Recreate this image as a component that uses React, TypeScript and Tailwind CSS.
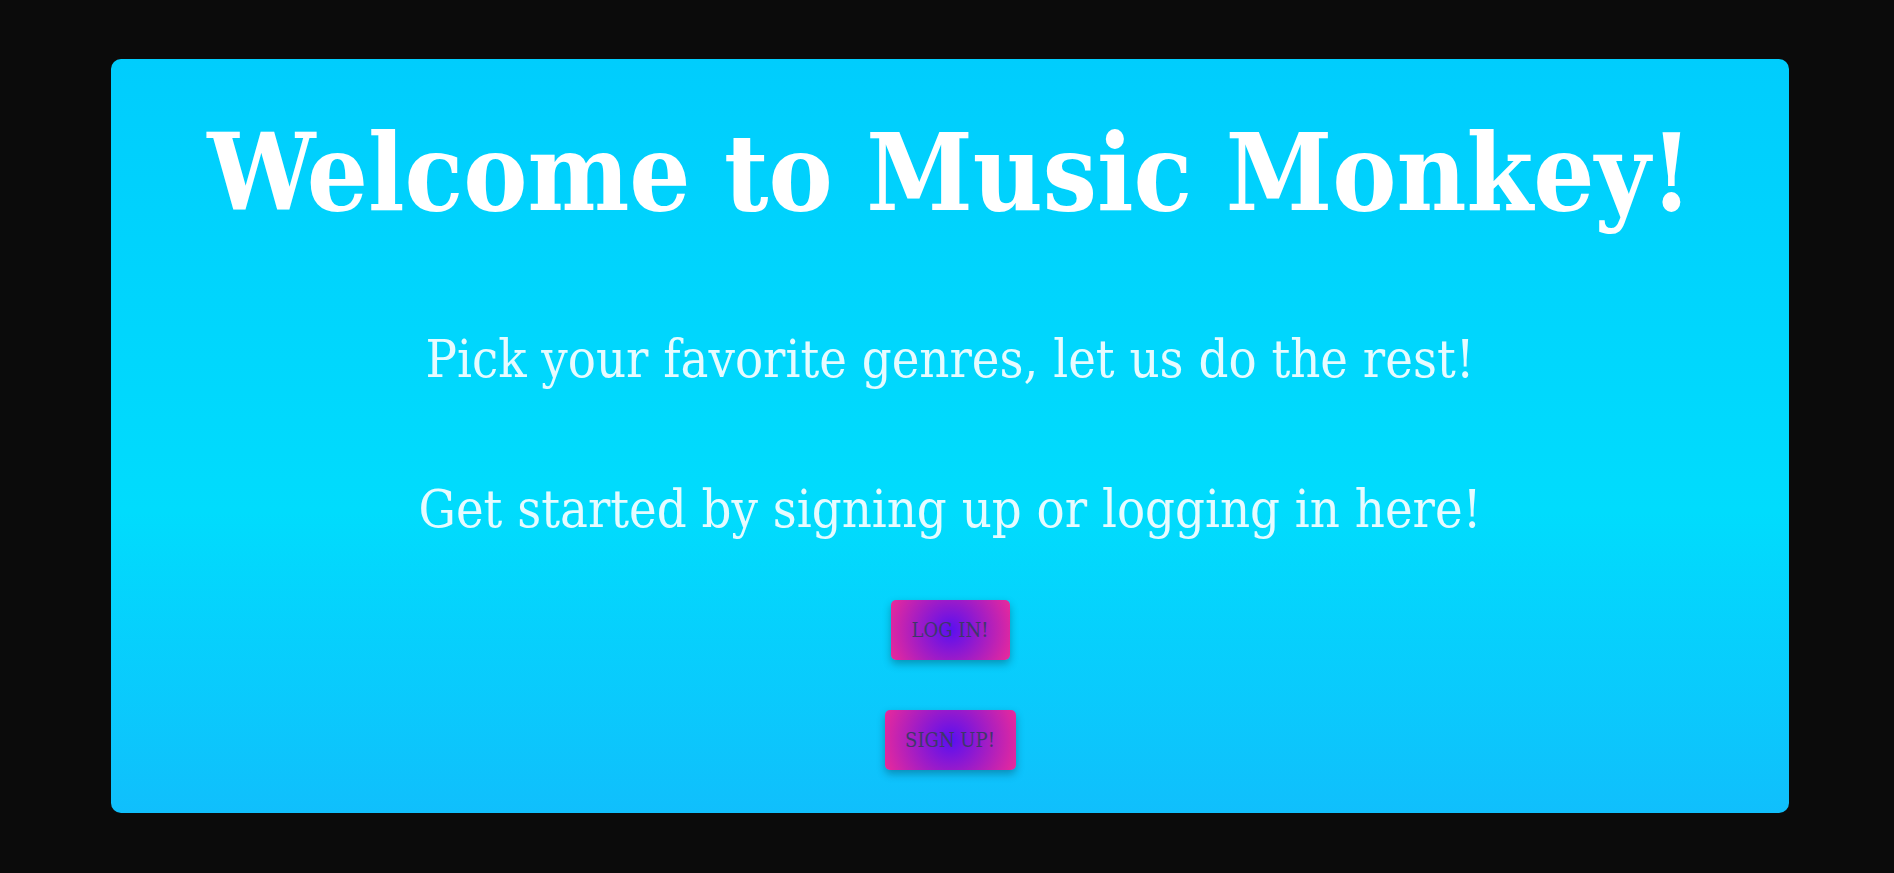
import React from 'react';

const slab = { fontFamily: '"DejaVu Serif Condensed", "DejaVu Serif", serif' };

const GradientButton = ({ label, width }: { label: string; width: string }) => (
  <button
    type="button"
    className={`${width} h-[60px] rounded-[5px] bg-[radial-gradient(circle,#5a0ff0_0%,#ea2a9a_100%)] text-[20px] uppercase text-[#3e386a] shadow-[0_4px_8px_rgba(0,0,0,0.28)]`}
    style={slab}
  >
    {label}
  </button>
);

export default function App() {
  return (
    <div className="h-screen overflow-hidden bg-[#0b0b0b] pl-[111px] pr-[105px] pt-[59px]" style={slab}>
      <div className="flex h-[754px] flex-col items-center rounded-[10px] bg-[linear-gradient(180deg,#00cdfd_0%,#00dcfd_60%,#10bffc_100%)]">
        <h1 className="mt-[50px] text-[107px] font-bold leading-[1.2] text-white">
          Welcome to Music Monkey!
        </h1>
        <p className="mt-[91px] text-[52px] leading-[1.2] text-[#e6fbff]">
          Pick your favorite genres, let us do the rest!
        </p>
        <p className="mt-[87px] text-[52px] leading-[1.2] text-[#e6fbff]">
          Get started by signing up or logging in here!
        </p>
        <div className="mt-[60px] flex flex-col items-center gap-[50px]">
          <GradientButton label="Log in!" width="w-[119px]" />
          <GradientButton label="Sign up!" width="w-[131px]" />
        </div>
      </div>
    </div>
  );
}
